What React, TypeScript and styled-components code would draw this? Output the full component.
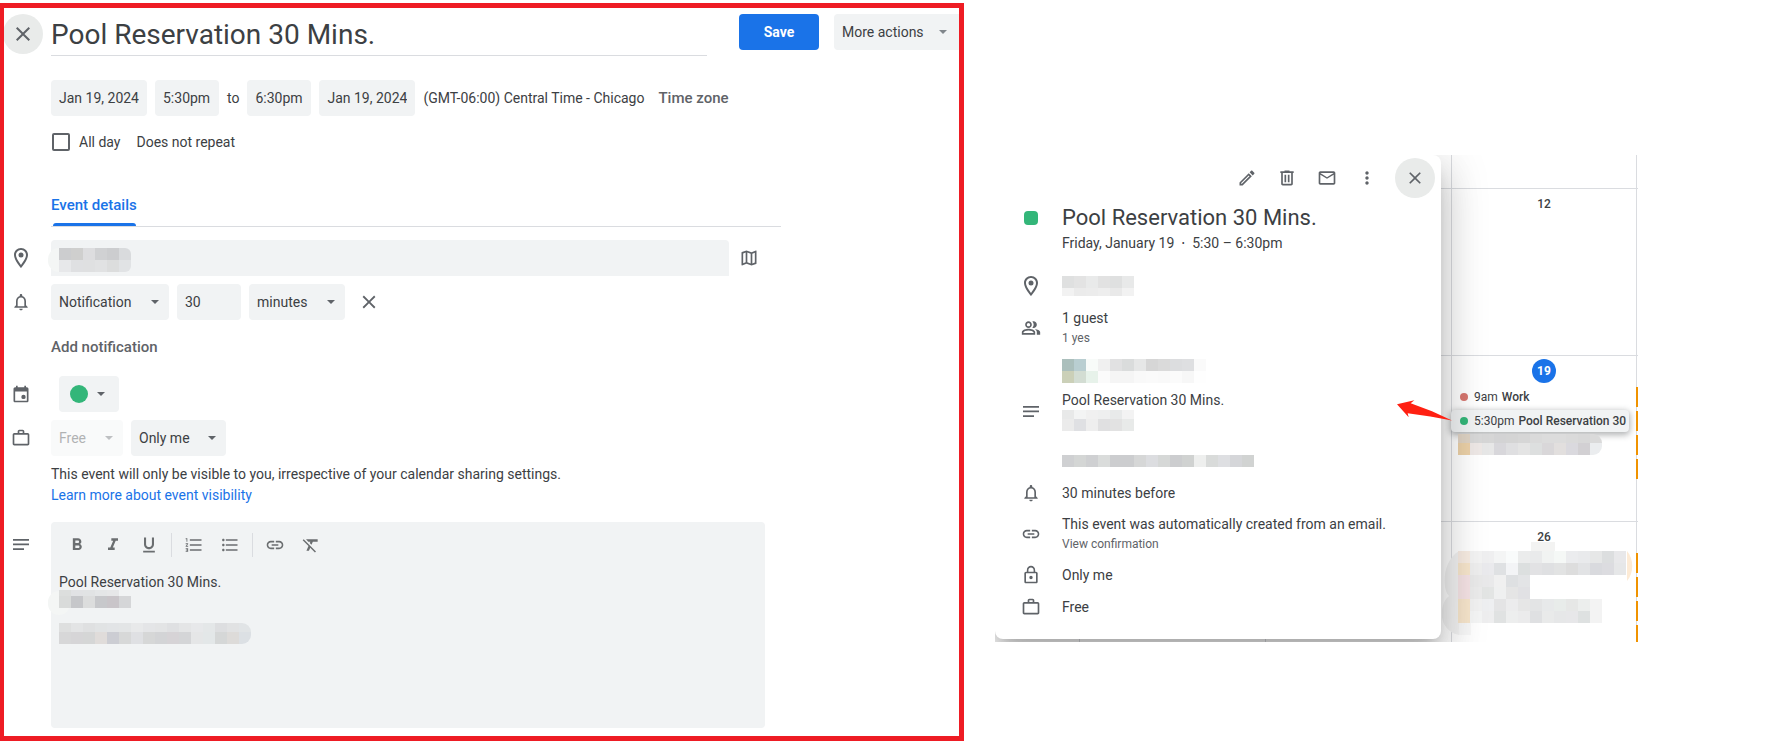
import React from "react";
import styled, { createGlobalStyle } from "styled-components";
import {
  MdClose,
  MdFormatBold,
  MdFormatClear,
  MdFormatItalic,
  MdFormatListBulleted,
  MdFormatListNumbered,
  MdFormatUnderlined,
  MdLink,
  MdLockOutline,
  MdMailOutline,
  MdMoreVert,
  MdNotificationsNone,
  MdOutlineEdit,
  MdOutlineLocationOn,
  MdOutlineMap,
  MdOutlinePeopleAlt,
  MdWorkOutline,
} from "react-icons/md";

const ink = "#3c4043";
const muted = "#5f6368";
const field = "#f1f3f4";
const line = "#dadce0";
const blue = "#1a73e8";
const green = "#33b679";

const GlobalStyle = createGlobalStyle`
  *, *::before, *::after { box-sizing: border-box; }
  body {
    margin: 0;
    background: #fff;
    color: ${ink};
    font: 14px/20px Roboto, "Liberation Sans", sans-serif;
  }
  button, input, select, textarea { font: inherit; color: inherit; margin: 0; }
  button { cursor: pointer; }
  svg { display: block; flex: none; }
`;

/* ---------- page ---------- */

const Page = styled.main`
  display: grid;
  grid-template-columns: 964fr 643fr;
  column-gap: 31px;
  align-items: start;
  padding: 3px 154px 3px 0;
`;

/* ---------- icons ---------- */

const NotesIcon = () => (
  <svg width="16" height="11" viewBox="0 0 16 11" fill="currentColor" aria-hidden="true">
    <path d="M0 0h16v1.700H0zM0 4.600h16v1.700H0zM0 9.200h11v1.700H0z" />
  </svg>
);

const CalendarIcon = () => (
  <svg width="20" height="20" viewBox="0 0 24 24" fill="currentColor" aria-hidden="true">
    <path d="M19 4h-1V2h-2v2H8V2H6v2H5c-1.1 0-2 .9-2 2v14c0 1.1.9 2 2 2h14c1.100 0 2-.9 2-2V6c0-1.100-.9-2-2-2zm0 16H5V9h14v11z" />
    <circle cx="15" cy="15.500" r="2.600" />
  </svg>
);

const TrashIcon = () => (
  <svg width="20" height="20" viewBox="0 0 24 24" fill="currentColor" aria-hidden="true">
    <path d="M15 4V3H9v1H4v2h1v13c0 1.100.9 2 2 2h10c1.100 0 2-.9 2-2V6h1V4h-5zm2 15H7V6h10v13zM9 8h2v9H9zm4 0h2v9h-2z" />
  </svg>
);

const Caret = () => (
  <svg width="8" height="4" viewBox="0 0 8 4" fill="currentColor" aria-hidden="true">
    <path d="M0 0h8L4 4z" />
  </svg>
);

/* ---------- pixelated private text ---------- */

type Band = { height: number; cells: string };

const Mosaic = ({ bands, round = 0, id }: { bands: Band[]; round?: number; id: string }) => {
  const rows = bands.map((band) => band.cells.split(" "));
  const width = Math.max(...rows.map((row) => row.length)) * 12;
  const height = bands.reduce((sum, band) => sum + band.height, 0);
  let top = 0;
  return (
    <svg width={width} height={height} shapeRendering="crispEdges" aria-hidden="true">
      <clipPath id={id}>
        <rect x={-20} width={width + 20} height={height} rx={round} />
      </clipPath>
      <g clipPath={`url(#${id})`}>
        {rows.map((row, r) => {
          const y = top;
          top += bands[r].height;
          return row.map((c, i) =>
            c === "-" ? null : (
              <rect key={`${r}-${i}`} x={i * 12} y={y} width="12" height={bands[r].height} fill={`#${c}`} />
            )
          );
        })}
      </g>
    </svg>
  );
};

const Smudge = styled.span<{ $top: number }>`
  position: absolute;
  left: -3px;
  top: ${(p) => p.$top}px;
  width: 22px;
  height: 24px;
  border-radius: 12px;
  background: #f4f6f5;
`;

const Overlay = styled.div<{ $top: number }>`
  position: absolute;
  left: 8px;
  top: ${(p) => p.$top}px;
  pointer-events: none;
`;

/* ---------- event editor ---------- */

const Panel = styled.form`
  min-width: 0;
  overflow: hidden;
  padding: 6px 0 8px;
  border: 5px solid #ee1c24;
  border-left-width: 4px;
`;

const Header = styled.header`
  display: flex;
  align-items: flex-start;
  margin-left: -1px;
`;

const RoundButton = styled.button`
  display: grid;
  place-items: center;
  flex: none;
  width: 40px;
  height: 40px;
  padding: 0;
  border: 0;
  border-radius: 50%;
  background: #e9ebea;
  color: ${muted};
`;

const TitleInput = styled.input`
  flex: 1;
  min-width: 0;
  height: 42px;
  margin: 0 32px 0 8px;
  padding: 0;
  border: 0;
  border-bottom: 1px solid ${line};
  background: none;
  font-size: 28px;
  line-height: 36px;
`;

const SaveButton = styled.button`
  flex: none;
  width: 80px;
  height: 36px;
  margin-right: 15px;
  padding: 0;
  border: 0;
  border-radius: 4px;
  background: ${blue};
  color: #fff;
  font-weight: 700;
`;

const MoreButton = styled.button`
  display: flex;
  align-items: center;
  justify-content: space-between;
  flex: none;
  width: 125px;
  height: 36px;
  padding: 0 12px 0 8px;
  border: 0;
  border-radius: 4px 0 0 4px;
  background: ${field};
  white-space: nowrap;

  svg { color: #80868b; }
`;

const Row = styled.div<{ $gap?: number }>`
  display: grid;
  grid-template-columns: 34px minmax(0, 1fr);
  column-gap: 13px;
  margin-top: ${(p) => p.$gap ?? 8}px;
`;

const Gutter = styled.div<{ $height?: number }>`
  display: grid;
  place-items: center;
  height: ${(p) => p.$height ?? 36}px;
  color: ${muted};
`;

const Line = styled.div<{ $gap?: number }>`
  display: flex;
  align-items: center;
  gap: ${(p) => p.$gap ?? 8}px;
  grid-column: 2;
`;

const Chip = styled.input<{ $width: number }>`
  width: ${(p) => p.$width}px;
  height: 36px;
  padding: 0 8px;
  border: 0;
  border-radius: 4px;
  background: ${field};
`;

const TextButton = styled.button`
  height: 36px;
  padding: 0;
  border: 0;
  background: none;
  color: ${muted};
  font-size: 15px;
  font-weight: 500;
`;

const CheckLabel = styled.label`
  display: flex;
  align-items: center;
  gap: 9px;
`;

const Checkbox = styled.input`
  appearance: none;
  width: 18px;
  height: 18px;
  margin-left: 1px;
  border: 2px solid ${muted};
  border-radius: 2px;
`;

const Tabs = styled.div`
  max-width: 730px;
  margin: 38px 0 0 47px;
  border-bottom: 1px solid ${line};
`;

const Tab = styled.button`
  position: relative;
  display: block;
  height: 36px;
  padding: 0 0 6px;
  border: 0;
  background: none;
  color: ${blue};
  font-size: 15px;
  font-weight: 500;

  &::after {
    content: "";
    position: absolute;
    inset: auto 1px 0 2px;
    height: 3px;
    border-radius: 3px 3px 0 0;
    background: ${blue};
  }
`;

const LocationBox = styled.div`
  position: relative;
  flex: 1;
  max-width: 678px;
`;

const LocationInput = styled.input`
  display: block;
  width: 100%;
  height: 36px;
  padding: 0 8px;
  border: 0;
  border-radius: 4px 4px 0 0;
  background: ${field};
`;

const IconButton = styled.button<{ $size?: number }>`
  display: grid;
  place-items: center;
  flex: none;
  width: ${(p) => p.$size ?? 36}px;
  height: ${(p) => p.$size ?? 36}px;
  padding: 0;
  border: 0;
  background: none;
  color: ${muted};
`;

const Picker = styled.div<{ $width: number; $off?: boolean }>`
  position: relative;
  width: ${(p) => p.$width}px;
  height: 36px;
  border-radius: 4px;
  background: ${field};
  opacity: ${(p) => (p.$off ? 0.4 : 1)};

  select {
    appearance: none;
    width: 100%;
    height: 100%;
    padding: 0 24px 0 8px;
    border: 0;
    background: none;
    opacity: 1;
  }

  svg {
    position: absolute;
    right: 10px;
    top: 16px;
    color: ${muted};
    pointer-events: none;
  }
`;

const ColorButton = styled.button`
  display: flex;
  align-items: center;
  gap: 9px;
  width: 60px;
  height: 36px;
  margin-left: 8px;
  padding: 0 11px;
  border: 0;
  border-radius: 4px;
  background: ${field};
  color: ${muted};
`;

const Dot = styled.span<{ $size: number; $color: string }>`
  flex: none;
  width: ${(p) => p.$size}px;
  height: ${(p) => p.$size}px;
  border-radius: 50%;
  background: ${(p) => p.$color};
`;

const Note = styled.p`
  margin: 8px 0 0 47px;
  line-height: 21px;

  a {
    display: block;
    width: fit-content;
    color: ${blue};
    text-decoration: none;
  }
`;

const Editor = styled.div`
  position: relative;
  max-width: 714px;
  border-radius: 4px;
  background: ${field};
`;

const Toolbar = styled.div`
  display: flex;
  align-items: center;
  height: 46px;
  padding: 0 8px;

  button { color: #6b6e70; }
`;

const Divider = styled.span`
  width: 1px;
  height: 24px;
  margin: 0 4px;
  background: ${line};
`;

const Description = styled.textarea`
  display: block;
  width: 100%;
  height: 160px;
  padding: 4px 8px;
  border: 0;
  background: none;
  resize: none;
`;

const Select = ({ label, value, width, off }: { label: string; value: string; width: number; off?: boolean }) => (
  <Picker $width={width} $off={off}>
    <select aria-label={label} disabled={off}>
      <option>{value}</option>
    </select>
    <Caret />
  </Picker>
);

const EventEditor = () => (
  <Panel onSubmit={(e) => e.preventDefault()}>
    <Header>
      <RoundButton type="button" aria-label="Close editor">
        <MdClose size={24} />
      </RoundButton>
      <TitleInput aria-label="Title" defaultValue="Pool Reservation 30 Mins." />
      <SaveButton type="submit">Save</SaveButton>
      <MoreButton type="button">
        More actions
        <Caret />
      </MoreButton>
    </Header>

    <Row $gap={24}>
      <Line>
        <Chip $width={96} aria-label="Start date" defaultValue="Jan 19, 2024" />
        <Chip $width={64} aria-label="Start time" defaultValue="5:30pm" />
        <span>to</span>
        <Chip $width={64} aria-label="End time" defaultValue="6:30pm" />
        <Chip $width={96} aria-label="End date" defaultValue="Jan 19, 2024" />
        <Line $gap={14}>
          <span>(GMT-06:00) Central Time - Chicago</span>
          <TextButton type="button">Time zone</TextButton>
        </Line>
      </Line>
    </Row>

    <Row $gap={16}>
      <Line $gap={16}>
        <CheckLabel>
          <Checkbox type="checkbox" />
          All day
        </CheckLabel>
        <span>Does not repeat</span>
      </Line>
    </Row>

    <Tabs role="tablist">
      <Tab type="button" role="tab" aria-selected="true">
        Event details
      </Tab>
    </Tabs>

    <Row $gap={13}>
      <Gutter>
        <MdOutlineLocationOn size={24} />
      </Gutter>
      <Line $gap={2}>
        <LocationBox>
          <LocationInput aria-label="Location" />
          <Smudge $top={8} />
          <Overlay $top={8}>
            <Mosaic
              id="place"
              round={6}
              bands={[
                { height: 12, cells: "cccdcf cfcfce dddddf d0d1d3 cccdcf d9dbdd" },
                { height: 12, cells: "e7e8ea dfe0e2 dfe0e1 e1e2e3 dcdddd e1e3e5" },
              ]}
            />
          </Overlay>
        </LocationBox>
        <IconButton type="button" aria-label="Preview in Maps">
          <MdOutlineMap size={20} />
        </IconButton>
      </Line>
    </Row>

    <Row>
      <Gutter>
        <MdNotificationsNone size={20} />
      </Gutter>
      <Line>
        <Select label="Notification method" value="Notification" width={118} />
        <Chip $width={64} aria-label="Amount of time" defaultValue="30" />
        <Select label="Unit of time" value="minutes" width={96} />
        <IconButton $size={32} type="button" aria-label="Remove notification">
          <MdClose size={22} />
        </IconButton>
      </Line>
    </Row>

    <Row $gap={9}>
      <Line>
        <TextButton type="button">Add notification</TextButton>
      </Line>
    </Row>

    <Row $gap={11}>
      <Gutter>
        <CalendarIcon />
      </Gutter>
      <ColorButton type="button" aria-label="Event color">
        <Dot $size={18} $color={green} />
        <Caret />
      </ColorButton>
    </Row>

    <Row>
      <Gutter>
        <MdWorkOutline size={20} />
      </Gutter>
      <Line>
        <Select label="Availability" value="Free" width={72} off />
        <Select label="Visibility" value="Only me" width={95} />
      </Line>
    </Row>

    <Note>
      This event will only be visible to you, irrespective of your calendar sharing settings.
      <a href="#visibility">Learn more about event visibility</a>
    </Note>

    <Row $gap={16}>
      <Gutter $height={44}>
        <NotesIcon />
      </Gutter>
      <Editor>
        <Toolbar role="toolbar" aria-label="Formatting">
          <IconButton type="button" aria-label="Bold"><MdFormatBold size={20} /></IconButton>
          <IconButton type="button" aria-label="Italic"><MdFormatItalic size={20} /></IconButton>
          <IconButton type="button" aria-label="Underline"><MdFormatUnderlined size={20} /></IconButton>
          <Divider />
          <IconButton type="button" aria-label="Numbered list"><MdFormatListNumbered size={20} /></IconButton>
          <IconButton type="button" aria-label="Bulleted list"><MdFormatListBulleted size={20} /></IconButton>
          <Divider />
          <IconButton type="button" aria-label="Insert link"><MdLink size={20} /></IconButton>
          <IconButton type="button" aria-label="Remove formatting"><MdFormatClear size={20} /></IconButton>
        </Toolbar>
        <Description aria-label="Description" defaultValue="Pool Reservation 30 Mins." />
        <Smudge $top={69} />
        <Overlay $top={68}>
          <Mosaic
            id="note-a"
            bands={[
              { height: 6, cells: "dcdedd e1e2e4 e1e3e4 e4e6e7 e6e7e8 -" },
              { height: 12, cells: "d9dbda c6c7ca dcdddd c7c8cb c9c5c9 d5d6d8" },
            ]}
          />
        </Overlay>
        <Overlay $top={101}>
          <Mosaic
            id="note-b"
            round={9}
            bands={[
              { height: 9, cells: "dedfdf e3e4e5 dfe0e1 e1e3e4 e2e4e6 e3e5e6 e8e9ea e4e5e7 e3e4e5 dfe0e2 e4e5e6 e7e8ea e4e7e8 dddee0 e1e2e3 e1e4e6" },
              { height: 12, cells: "d7d7d8 d6d5d7 d5d6d6 e0dcda cccdd3 d7d8d8 dfe0e3 d6d7d7 d3d4d6 d6d3d6 d4d5d7 e5e6e7 e3e7e8 d5d7d7 dddbd9 dce0e4" },
            ]}
          />
        </Overlay>
      </Editor>
    </Row>
  </Panel>
);

/* ---------- month view ---------- */

const Month = styled.section`
  position: relative;
  display: grid;
  grid-template-columns: 84fr 186fr 186fr 185fr 2fr;
  grid-template-rows: 33px 167px 166px 121px;
  min-width: 0;
  margin-top: 152px;
  overflow: hidden;
`;

const Cell = styled.div<{ $first?: boolean; $top?: boolean }>`
  position: relative;
  min-width: 0;
  padding-top: 3px;
  border-left: ${(p) => (p.$first ? 0 : 1)}px solid ${line};
  border-top: ${(p) => (p.$top ? 0 : 1)}px solid ${line};
`;

const DayNumber = styled.div<{ $today?: boolean }>`
  width: 24px;
  margin: 0 auto 3px;
  border-radius: 50%;
  background: ${(p) => (p.$today ? blue : "none")};
  color: ${(p) => (p.$today ? "#fff" : ink)};
  font-size: 12px;
  font-weight: ${(p) => (p.$today ? 700 : 500)};
  line-height: 24px;
  text-align: center;
`;

const EventButton = styled.button<{ $active?: boolean }>`
  display: flex;
  align-items: center;
  width: calc(100% - 6px);
  height: 22px;
  margin: 0 0 2px -1px;
  padding: 0 2px 0 9px;
  overflow: visible;
  border: 0;
  border-radius: 4px;
  background: ${(p) => (p.$active ? field : "none")};
  box-shadow: ${(p) => (p.$active ? "0 2px 6px 1px rgba(60,64,67,.4)" : "none")};
  font-size: 12px;
  white-space: nowrap;

  b { margin-left: 4px; font-weight: 500; }
  span + span { margin-left: 6px; }
`;

const Bars = styled.div`
  display: grid;
  gap: 4px;
  margin: 28px 0 0 -1px;

  i {
    width: 2px;
    height: 20px;
    background: #f09300;
  }
`;

const CellMosaic = styled.div<{ $top: number }>`
  position: absolute;
  left: 6px;
  top: ${(p) => p.$top}px;
`;

/* Soft brush edge left round the hidden entries of the 26th. */
const Brush = styled.svg`
  position: absolute;
  left: -10px;
  top: 19px;
`;

const Popover = styled.aside`
  position: absolute;
  inset: 0 auto auto 0;
  width: calc(100% - 197px);
  padding: 3px 6px 16px 0;
  border-radius: 0 8px 8px 8px;
  background: #fff;
  box-shadow: 0 24px 38px 3px rgba(0, 0, 0, 0.14), 0 9px 46px 8px rgba(0, 0, 0, 0.12),
    0 11px 15px -7px rgba(0, 0, 0, 0.2);
`;

const Actions = styled.div`
  display: flex;
  justify-content: flex-end;
  margin-bottom: 6px;

  ${RoundButton} { margin-left: 8px; }
`;

const Item = styled.div<{ $gap?: number; $height?: number; $start?: boolean }>`
  display: grid;
  grid-template-columns: 24px minmax(0, 1fr);
  column-gap: 19px;
  align-items: ${(p) => (p.$start ? "start" : "center")};
  justify-items: start;
  min-height: ${(p) => p.$height ?? 32}px;
  margin-top: ${(p) => p.$gap ?? 0}px;
  padding-left: 24px;
`;

const Lead = styled.span<{ $height?: number }>`
  display: grid;
  place-items: center;
  width: 24px;
  height: ${(p) => p.$height ?? 24}px;
  color: ${muted};
`;

const Swatch = styled.span`
  width: 14px;
  height: 14px;
  border-radius: 4px;
  background: ${green};
`;

const Heading = styled.h2`
  margin: 0 0 1px;
  font-size: 22px;
  font-weight: 400;
  line-height: 28px;
`;

const Text = styled.p`
  margin: 0;
`;

const Small = styled.p`
  margin: 0;
  color: ${muted};
  font-size: 12px;

  a { color: inherit; text-decoration: none; }
`;

const Stack = styled.div<{ $gap?: number }>`
  display: grid;
  gap: ${(p) => p.$gap ?? 0}px;
`;

const Pointer = styled.svg`
  position: absolute;
  right: 186px;
  top: 245px;
`;

const EventPopover = () => (
  <Popover aria-label="Event summary">
    <Actions>
      <IconButton $size={40} type="button" aria-label="Edit event"><MdOutlineEdit size={20} /></IconButton>
      <IconButton $size={40} type="button" aria-label="Delete event"><TrashIcon /></IconButton>
      <IconButton $size={40} type="button" aria-label="Email guests"><MdMailOutline size={20} /></IconButton>
      <IconButton $size={40} type="button" aria-label="Options"><MdMoreVert size={20} /></IconButton>
      <RoundButton type="button" aria-label="Close"><MdClose size={20} /></RoundButton>
    </Actions>
    <Item $height={49} $start>
      <Lead $height={28}><Swatch /></Lead>
      <div>
        <Heading>Pool Reservation 30 Mins.</Heading>
        <Text>Friday, January 19 &nbsp;⋅&nbsp; 5:30 – 6:30pm</Text>
      </div>
    </Item>
    <Item $gap={17}>
      <Lead><MdOutlineLocationOn size={24} /></Lead>
      <Mosaic
        id="pop-place"
        bands={[
          { height: 12, cells: "dfe0e0 e3e3e3 e9eaea e2e2e2 dfe0e0 e8e9e9" },
          { height: 8, cells: "f2f2f2 ebebeb ececec eeeeee e9e9e9 f2f2f2" },
        ]}
      />
    </Item>
    <Item $gap={6} $height={40}>
      <Lead><MdOutlinePeopleAlt size={20} /></Lead>
      <div>
        <Text>1 guest</Text>
        <Small>1 yes</Small>
      </div>
    </Item>
    <Item $gap={11} $height={24}>
      <Lead />
      <Mosaic
        id="pop-guest"
        bands={[
          { height: 12, cells: "abbfbc b9ced1 f8fbf9 f0f0f0 e1e1e2 dadcdc e6e7e7 d6d6d6 dadada dcdddf dedfe1 fafafa" },
          { height: 12, cells: "cbd0b8 d3ddd3 e7f2ea fbfbfb f5f5f5 f5f5f5 f9f9f9 fafafa f9f9f9 fbfbfb f7f7f7 fefefe" },
        ]}
      />
    </Item>
    <Item $gap={7} $height={77} $start>
      <Lead $height={42}><NotesIcon /></Lead>
      <Stack $gap={24}>
        <div>
          <Text>Pool Reservation 30 Mins.</Text>
          <Mosaic
            id="pop-note-a"
            bands={[
              { height: 9, cells: "e8e9e9 f3f4f4 f0f0f0 eeefef e8eaea f3f3f3" },
              { height: 12, cells: "ebebeb dfe0e3 eeeeee e0e0e1 e2e2e2 e8eae9" },
            ]}
          />
        </div>
        <Mosaic
          id="pop-note-b"
          bands={[
            { height: 12, cells: "cfd0d2 d4d6d5 cfd0d2 dadcdb cccdcf cccdcf d6d7d7 dcdde0 d6d8d7 cccdcf d0d2d1 eeefee d9dbda dedfe2 d5d6d9 d1d3d2" },
          ]}
        />
      </Stack>
    </Item>
    <Item $gap={10}>
      <Lead><MdNotificationsNone size={20} /></Lead>
      <Text>30 minutes before</Text>
    </Item>
    <Item $gap={5} $height={40}>
      <Lead><MdLink size={20} /></Lead>
      <div>
        <Text>This event was automatically created from an email.</Text>
        <Small><a href="#confirmation">View confirmation</a></Small>
      </div>
    </Item>
    <Item $gap={5}>
      <Lead><MdLockOutline size={20} /></Lead>
      <Text>Only me</Text>
    </Item>
    <Item>
      <Lead><MdWorkOutline size={20} /></Lead>
      <Text>Free</Text>
    </Item>
  </Popover>
);

const FourBars = () => (
  <Bars>
    <i />
    <i />
    <i />
    <i />
  </Bars>
);

const Blanks = ({ top }: { top?: boolean }) => (
  <>
    <Cell $first $top={top} />
    <Cell $top={top} />
    <Cell $top={top} />
  </>
);

const MonthView = () => (
  <Month aria-label="Month view">
    <Blanks top />
    <Cell $top />
    <Cell $top />

    <Blanks />
    <Cell><DayNumber>12</DayNumber></Cell>
    <Cell />

    <Blanks />
    <Cell>
      <DayNumber $today>19</DayNumber>
      <EventButton type="button">
        <Dot $size={8} $color="#d87770" />
        <span>9am</span>
        <b>Work</b>
      </EventButton>
      <EventButton type="button" $active>
        <Dot $size={8} $color={green} />
        <span>5:30pm</span>
        <b>Pool Reservation 30</b>
      </EventButton>
      <CellMosaic $top={78}>
        <Mosaic
          id="cell-19"
          round={9}
          bands={[
            { height: 9, cells: "dfd3c4 d8d8d8 d6d6d6 d3d3d4 d4d4d4 d6d6d6 dadada dcdcdc dcdcdc dadada d8d8d8 dadada" },
            { height: 12, cells: "ecd1a8 eee8e6 e7e7e7 d8d7db dfdfe1 e4e4e4 dddfdf d9d7d9 e2dfde dad9de d2d0d3 ebedef" },
          ]}
        />
      </CellMosaic>
    </Cell>
    <Cell><FourBars /></Cell>

    <Blanks />
    <Cell>
      <DayNumber>26</DayNumber>
      <Brush width="192" height="96" viewBox="0 0 192 96" aria-hidden="true">
        <path d="M17 94C-4 90-4 64 7 55 0 48 0 20 17 10z" fill="#f3f3f3" />
        <path d="M17 82h12v12H17z" fill="#f8f8f8" />
        <path d="M89 1h24v10H89z" fill="#f3f3f2" />
        <path d="M185 10c7 8 7 22 0 30z" fill="#fdebd6" />
      </Brush>
      <CellMosaic $top={29}>
        <Mosaic
          id="cell-26"
          bands={[
            { height: 12, cells: "f8ede3 f3f3f3 efeff0 f4f5f5 f9fbfb ebecec e9eaeb f1f3f2 f5f8f6 ebecee e9eaec e6e7e7 dcdedf e8e8ea" },
            { height: 12, cells: "f7e6cc eeeeee eaeaed dfe1e3 f3f4f6 dcdfdf e2e2e4 dfe0e2 e2e3e3 dddddd e2e3e5 d9dade dcdce0 e6e7e8" },
            { height: 12, cells: "f5e3e5 e9e9e9 e9e9ea f0f0f0 dee0e2 e3e4e6" },
            { height: 12, cells: "f5e3e5 ebebeb e3e5e4 eff0f0 e5e5e5 e1e1e4" },
            { height: 12, cells: "f7e6cc f1f1f1 eeeff1 e4e4e5 ececed e6e6e6 e3e4e5 e7e9ea e8ecea e6e7e6 eceeed f3f3f3" },
            { height: 12, cells: "f7e6cc f4f5f5 eeeeef e0e2e2 edeeee ebebec dfe0e2 e9eaea e6e7e8 e7e7e9 dee1e1 f3f3f3" },
          ]}
        />
      </CellMosaic>
    </Cell>
    <Cell><FourBars /></Cell>

    <EventPopover />
    <Pointer width="55" height="21" viewBox="0 0 165 62" fill="#ff2012" aria-hidden="true">
      <path d="M0 12 52 0 41 9 105 33 165 61 100 49 32 39 35 51z" />
    </Pointer>
  </Month>
);

export default function App() {
  return (
    <>
      <GlobalStyle />
      <Page>
        <EventEditor />
        <MonthView />
      </Page>
    </>
  );
}
